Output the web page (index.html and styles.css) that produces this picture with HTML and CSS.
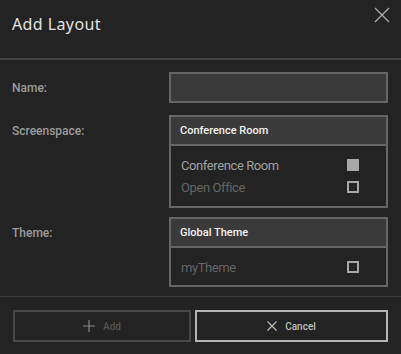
FILE: index.html
```html
<!DOCTYPE html>
<html lang="en">
<head>
  <meta charset="UTF-8">
  <title>Add Layout</title>
  <link rel="stylesheet" href="styles.css">
</head>
<body>
  <div class="dialog">
    <div class="header">
      <h1>Add Layout</h1>
      <button class="close" title="Close">
        <svg width="16" height="16" viewBox="0 0 16 16" fill="none" stroke="currentColor" stroke-width="1.4">
          <path d="M1 1L15 15M15 1L1 15"></path>
        </svg>
      </button>
    </div>

    <div class="form">
      <div class="row">
        <label>Name:</label>
        <input type="text" class="input">
      </div>

      <div class="row row-screenspace">
        <label>Screenspace:</label>
        <div class="select">
          <div class="select-head">Conference Room</div>
          <div class="select-list two">
            <div class="option selected">
              <span>Conference Room</span>
              <span class="check filled"></span>
            </div>
            <div class="option">
              <span>Open Office</span>
              <span class="check"></span>
            </div>
          </div>
        </div>
      </div>

      <div class="row row-theme">
        <label>Theme:</label>
        <div class="select">
          <div class="select-head">Global Theme</div>
          <div class="select-list">
            <div class="option">
              <span>myTheme</span>
              <span class="check"></span>
            </div>
          </div>
        </div>
      </div>
    </div>

    <div class="footer">
      <button class="btn btn-add" disabled>
        <svg width="12" height="12" viewBox="0 0 12 12" fill="none" stroke="currentColor" stroke-width="1.2">
          <path d="M6 0V12M0 6H12"></path>
        </svg>
        Add
      </button>
      <button class="btn btn-cancel">
        <svg width="10" height="10" viewBox="0 0 10 10" fill="none" stroke="currentColor" stroke-width="1.2">
          <path d="M0.5 0.5L9.5 9.5M9.5 0.5L0.5 9.5"></path>
        </svg>
        Cancel
      </button>
    </div>
  </div>
</body>
</html>
```

FILE: styles.css
```css
body {
  margin: 0;
  padding: 0;
  background-color: #232323;
  font-family: Roboto, 'Liberation Sans', sans-serif;
  color: #9a9a9a;
}
.dialog {
  width: 401px;
  height: 354px;
  display: flex;
  flex-direction: column;
}
.header {
  height: 58px;
  border-bottom: 2px solid #444;
  display: flex;
  justify-content: space-between;
  align-items: flex-start;
  padding: 0 11px 0 12px;
}
h1 {
  margin: 13px 0 0 0;
  font-family: 'Noto Sans', sans-serif;
  font-weight: 400;
  font-size: 16px;
  letter-spacing: 0.4px;
  color: #e2e2e2;
}
.close {
  background: none;
  border: none;
  padding: 0;
  margin-top: 7px;
  color: #a8a8a8;
  cursor: pointer;
}
.form {
  padding: 12px 13px 9px 12px;
  display: flex;
  flex-direction: column;
  border-bottom: 1px solid #3c3c3c;
}
.row {
  display: grid;
  grid-template-columns: 157px 1fr;
  align-items: start;
}
.row-screenspace {
  margin-top: 12px;
}
.row-theme {
  margin-top: 9px;
}
label {
  font-size: 12px;
  font-weight: 500;
  color: #9c9c9c;
  line-height: 30px;
  margin-top: 1px;
}
.input {
  box-sizing: border-box;
  height: 31px;
  width: 100%;
  background: #3a3a3a;
  border: 2px solid #666;
  margin: 0;
}
.select {
  border: 2px solid #666;
}
.select-head {
  height: 27px;
  line-height: 27px;
  padding-left: 9px;
  background: #3a3a3a;
  border-bottom: 2px solid #666;
  font-size: 11px;
  font-weight: 500;
  color: #f2f2f2;
}
.select-list {
  padding: 8px 0 7px 0;
}
.select-list.two {
  padding-bottom: 8px;
}
.option {
  height: 22px;
  display: flex;
  align-items: center;
  justify-content: space-between;
  padding: 0 27px 0 10px;
  font-size: 13px;
  color: #666;
  letter-spacing: -0.4px;
}
.option.selected {
  color: #a0a0a0;
}
.check {
  box-sizing: border-box;
  width: 12px;
  height: 12px;
  border: 2px solid #a8a8a8;
}
.check.filled {
  background: #a8a8a8;
}
.footer {
  display: flex;
  gap: 4px;
  padding: 13px 13px 0 13px;
}
.btn {
  height: 32px;
  background: #232323;
  font-family: Roboto, sans-serif;
  font-size: 10px;
  font-weight: 500;
  display: flex;
  align-items: center;
  justify-content: center;
  gap: 8px;
  cursor: pointer;
}
.btn-add {
  width: 178px;
  border: 2px solid #484848;
  color: #555;
}
.btn-add svg {
  color: #888;
}
.btn-cancel {
  flex: 1;
  border: 2px solid #b4b4b4;
  color: #bdbdbd;
}
```
